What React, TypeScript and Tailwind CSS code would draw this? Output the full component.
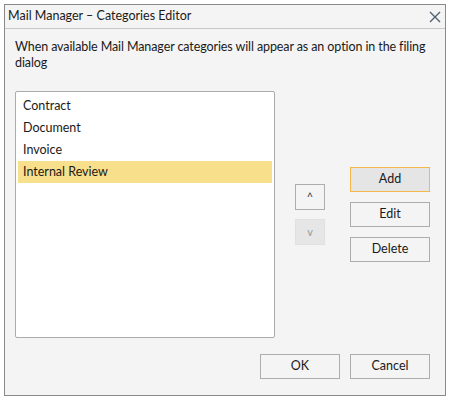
export default function App() {
  const items = ["Contract", "Document", "Invoice", "Internal Review"];
  const selected = 3;

  return (
    <div className="w-[450px] h-[400px] bg-white p-1 font-['Lato',sans-serif] text-[12.5px] text-[#1a1a1a]">
      <div className="flex h-[392px] w-[442px] flex-col border border-[#8a8a8a] bg-[#f4f4f4]">
        {/* title bar */}
        <div className="flex h-[24px] items-center justify-between border-b border-[#c8c8c8] pl-[3px] pr-[3px]">
          <span className="text-[12.5px] leading-none">Mail Manager – Categories Editor</span>
          <svg width="12" height="12" viewBox="0 0 12 12" className="mr-[1px]">
            <path d="M1 1 L11 11 M11 1 L1 11" stroke="#4f5f70" strokeWidth="1.4" fill="none" />
          </svg>
        </div>

        <div className="flex flex-1 flex-col px-[10px] pt-[10px]">
          <p className="leading-[16px] tracking-[-0.1px]">
            When available Mail Manager categories will appear as an option in the filing dialog
          </p>

          <div className="mt-[20px] flex items-center">
            <div className="h-[247px] w-[260px] rounded-[2px] border border-[#ababab] bg-white px-[2px] pt-[3px]">
              {items.map((item, i) => (
                <div
                  key={item}
                  className={`flex h-[22px] items-center px-[5px] ${i === selected ? "bg-[#f8df8c]" : ""}`}
                >
                  {item}
                </div>
              ))}
            </div>

            <div className="ml-[20px] flex flex-col gap-[9px]">
              <button className="flex h-[26px] w-[30px] items-center justify-center border border-[#adadad] bg-[#f4f4f4] text-[11px] text-[#333]">
                ^
              </button>
              <button className="flex h-[26px] w-[30px] items-center justify-center border border-[#e0e0e0] bg-[#e6e6e6] text-[11px] text-[#9a9a9a]">
                v
              </button>
            </div>

            <div className="ml-[25px] flex flex-col gap-[10px]">
              <button className="h-[25px] w-[80px] border border-[#f2b94a] bg-[#e5e5e5]">Add</button>
              <button className="h-[25px] w-[80px] border border-[#adadad] bg-[#f4f4f4]">Edit</button>
              <button className="h-[25px] w-[80px] border border-[#adadad] bg-[#f4f4f4]">Delete</button>
            </div>
          </div>

          <div className="mt-[16px] flex justify-end gap-[10px] pr-[5px]">
            <button className="h-[25px] w-[80px] border border-[#adadad] bg-[#f4f4f4]">OK</button>
            <button className="h-[25px] w-[80px] border border-[#adadad] bg-[#f4f4f4]">Cancel</button>
          </div>
        </div>
      </div>
    </div>
  );
}
